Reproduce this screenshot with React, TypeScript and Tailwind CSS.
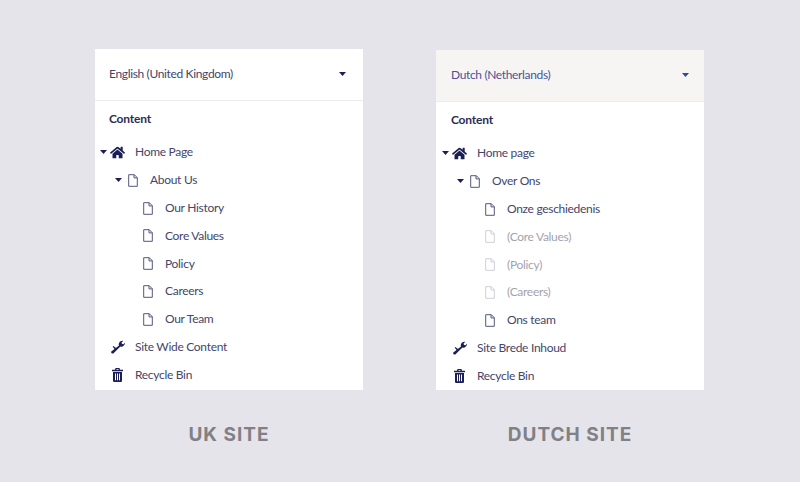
import { FaHome } from "react-icons/fa";

type Row = {
  label: string;
  icon: "home" | "file" | "wrench" | "trash";
  depth: number;
  caret?: boolean;
  muted?: boolean;
};

const ukRows: Row[] = [
  { label: "Home Page", icon: "home", depth: 0, caret: true },
  { label: "About Us", icon: "file", depth: 1, caret: true },
  { label: "Our History", icon: "file", depth: 2 },
  { label: "Core Values", icon: "file", depth: 2 },
  { label: "Policy", icon: "file", depth: 2 },
  { label: "Careers", icon: "file", depth: 2 },
  { label: "Our Team", icon: "file", depth: 2 },
  { label: "Site Wide Content", icon: "wrench", depth: 0 },
  { label: "Recycle Bin", icon: "trash", depth: 0 },
];

const dutchRows: Row[] = [
  { label: "Home page", icon: "home", depth: 0, caret: true },
  { label: "Over Ons", icon: "file", depth: 1, caret: true },
  { label: "Onze geschiedenis", icon: "file", depth: 2 },
  { label: "(Core Values)", icon: "file", depth: 2, muted: true },
  { label: "(Policy)", icon: "file", depth: 2, muted: true },
  { label: "(Careers)", icon: "file", depth: 2, muted: true },
  { label: "Ons team", icon: "file", depth: 2 },
  { label: "Site Brede Inhoud", icon: "wrench", depth: 0 },
  { label: "Recycle Bin", icon: "trash", depth: 0 },
];

const Caret = ({ className }: { className: string }) => (
  <svg width="7" height="4" viewBox="0 0 7 4" className={className}>
    <path d="M0 0h7L3.5 4z" fill="currentColor" />
  </svg>
);

const FileIcon = ({ muted }: { muted?: boolean }) => (
  <svg
    width="10"
    height="13"
    viewBox="0 0 10 13"
    fill="none"
    stroke="currentColor"
    strokeWidth="1"
    className={muted ? "text-[#cfcfd8]" : "text-[#55577d]"}
  >
    <path d="M.7.7h5.6l3 3v8.600H.7z" strokeLinejoin="round" />
    <path d="M6 .7v3.2h3.3" />
  </svg>
);

const WrenchIcon = () => (
  <svg width="15" height="14" viewBox="0 0 15 14" className="text-[#1b1f56]">
    <path
      d="M9 5.400C7.900 3 10.400.2 13.300.8l-1.800 2 .6 1.300 1.500.1 1.300-1.700c.4 2.800-2.400 4.900-4.500 4L3.300 13.400c-.9.700-2.700-.7-2-1.800z"
      fill="currentColor"
    />
    <path d="M3.400 6l3.600 2.800-1.400 1.400-2.900-3.400z" fill="currentColor" />
  </svg>
);

const TrashIcon = () => (
  <svg width="11" height="14" viewBox="0 0 11 14" className="text-[#1b1f56]">
    <path d="M3.500 0h4l.5 1.800h3v1.400H0V1.800h3zM4.500 1v.8h2V1z" fill="currentColor" fillRule="evenodd" />
    <path
      d="M1 4h9v9.200l-.8.800H1.800L1 13.200zM3 5.500v6.800h1V5.500zm2 0v6.800h1V5.500zm2 0v6.800h1V5.500z"
      fill="currentColor"
      fillRule="evenodd"
    />
  </svg>
);

const RowIcon = ({ row }: { row: Row }) => {
  if (row.icon === "file") return <FileIcon muted={row.muted} />;
  if (row.icon === "home") return <FaHome className="text-[15px] text-[#1b1f56]" />;
  if (row.icon === "wrench") return <WrenchIcon />;
  return <TrashIcon />;
};

const TreeRow = ({ row }: { row: Row }) => {
  const indent = row.depth === 0 ? "pl-[5px]" : row.depth === 1 ? "pl-5" : "pl-[35px]";
  return (
    <div className={`flex h-[27.8px] items-center ${indent}`}>
      <span className="flex w-[10px] items-center">
        {row.caret && <Caret className="text-[#1b1f56]" />}
      </span>
      <span className="flex w-[15px] justify-center">
        <RowIcon row={row} />
      </span>
      <span
        className={`ml-[10px] text-[12px] leading-none tracking-[-0.3px] ${row.muted ? "text-[#a3a3ad]" : "text-[#44466b]"}`}
      >
        {row.label}
      </span>
    </div>
  );
};

const Panel = ({
  language,
  rows,
  tinted,
}: {
  language: string;
  rows: Row[];
  tinted?: boolean;
}) => (
  <div className={`w-[268px] bg-white ${tinted ? "h-[340px]" : "h-[341px]"}`}>
    <div
      className={`flex h-[52px] items-center justify-between border-b border-[#ececf0] pb-[2px] ${
        tinted
          ? "bg-[#f7f5f3] pl-[15px] pr-[15px] text-[#4a5499]"
          : "pl-[14px] pr-[17px] text-[#43456b]"
      }`}
    >
      <span className="text-[12px] leading-none tracking-[-0.35px]">{language}</span>
      <Caret className={tinted ? "text-[#2b4a9b]" : "text-[#1b1f56]"} />
    </div>
    <div
      className={`pt-[10px] text-[12px] font-bold leading-[15px] tracking-[-0.2px] text-[#2b2d55] ${
        tinted ? "pl-[15px]" : "pl-[14px]"
      }`}
    >
      Content
    </div>
    <div className={`pt-[12.6px] ${tinted ? "pl-px" : ""}`}>
      {rows.map((row) => (
        <TreeRow key={row.label} row={row} />
      ))}
    </div>
  </div>
);

const Column = ({ title, children, className }: { title: string; children: React.ReactNode; className: string }) => (
  <div className={`flex w-[268px] flex-col items-center ${className}`}>
    {children}
    <div className="mt-[34px] font-['Inter',sans-serif] text-[19px] font-bold leading-[22px] tracking-[1px] text-[#808086]">
      {title}
    </div>
  </div>
);

export default function App() {
  return (
    <div className="flex h-[482px] w-[800px] items-start gap-[73px] overflow-hidden bg-[#e4e4ea] pl-[95px] font-['Lato',sans-serif]">
      <Column title="UK SITE" className="pt-[49px]">
        <Panel language="English (United Kingdom)" rows={ukRows} />
      </Column>
      <Column title="DUTCH SITE" className="pt-[50px]">
        <Panel language="Dutch (Netherlands)" rows={dutchRows} tinted />
      </Column>
    </div>
  );
}
